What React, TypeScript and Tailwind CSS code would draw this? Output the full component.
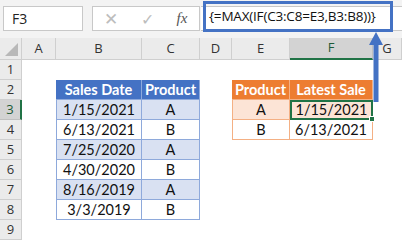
import React from 'react';

const cols = ['A', 'B', 'C', 'D', 'E', 'F', 'G'];

const sales = [
  ['1/15/2021', 'A'],
  ['6/13/2021', 'B'],
  ['7/25/2020', 'A'],
  ['4/30/2020', 'B'],
  ['8/16/2019', 'A'],
  ['3/3/2019', 'B'],
];

const App: React.FC = () => {
  return (
    <div className="relative w-[402px] h-[241px] overflow-hidden bg-white font-['Open_Sans',sans-serif]">
      {/* formula bar */}
      <div className="h-[38px] bg-[#f3f3f3] flex items-start pt-[6px] pl-[3px]">
        <div className="w-[80px] h-[25px] bg-white border border-[#c8c8c8] flex items-center pl-[8px] text-[14px] text-[#222]">
          F3
        </div>
        <div className="ml-[9px] w-[108px] h-[25px] bg-white border border-[#c8c8c8] flex items-center text-[#bdbdbd]">
          <span className="w-[36px] text-center text-[17px] leading-none">✕</span>
          <span className="w-[36px] text-center text-[16px] leading-none">✓</span>
          <span className="w-[34px] text-center text-[15px] italic font-['Liberation_Serif',serif] text-[#555]">fx</span>
        </div>
      </div>

      {/* sheet grid */}
      <div className="grid grid-cols-[22px_34px_86px_58px_32px_58px_83px_1fr] grid-rows-[22px_repeat(9,20px)] font-['Lato',sans-serif]">
        <div className="bg-[#ebebeb] border-r border-b border-[#cfcfcf] relative">
          <div className="absolute right-[3px] bottom-[3px] w-0 h-0 border-l-[13px] border-l-transparent border-b-[13px] border-b-[#b8b8b8]" />
        </div>
        {cols.map((c) => (
          <div
            key={c}
            className={
              c === 'F'
                ? 'bg-[#d3d3d3] border-r border-[#c0c0c0] border-b-2 border-b-[#217346] flex items-center justify-center text-[13px] text-[#1d5a37] font-["Open_Sans",sans-serif]'
                : 'bg-[#ebebeb] border-r border-b border-[#cfcfcf] flex items-center justify-center text-[13px] text-[#333] font-["Open_Sans",sans-serif]'
            }
          >
            {c}
          </div>
        ))}

        {Array.from({ length: 9 }, (_, i) => (
          <div
            key={i}
            style={{ gridRowStart: i + 2, gridColumnStart: 1 }}
            className={
              i === 2
                ? 'bg-[#d3d3d3] border-b border-[#c0c0c0] border-r-2 border-r-[#217346] flex items-center justify-center text-[13px] text-[#1d5a37] font-["Open_Sans",sans-serif]'
                : 'bg-[#ebebeb] border-b border-r border-[#cfcfcf] flex items-center justify-center text-[13px] text-[#333] font-["Open_Sans",sans-serif]'
            }
          >
            {i + 1}
          </div>
        ))}

        {/* sales table */}
        <div className="col-start-3 col-end-5 row-start-3 row-end-10 grid grid-cols-[86px_58px] grid-rows-[repeat(7,20px)] text-[14.5px] text-[#111]">
          <div className="bg-[#4472c4] text-white font-bold flex items-center justify-center border-r border-b border-[#8ea9db]">Sales Date</div>
          <div className="bg-[#4472c4] text-white font-bold flex items-center justify-center border-b border-r border-[#8ea9db]">Product</div>
          {sales.map(([d, p], i) => (
            <React.Fragment key={d}>
              <div className={`${i % 2 === 0 ? 'bg-[#d9e1f2]' : 'bg-white'} flex items-center justify-center border-l border-r border-b border-[#8ea9db]`}>{d}</div>
              <div className={`${i % 2 === 0 ? 'bg-[#d9e1f2]' : 'bg-white'} flex items-center justify-center border-r border-b border-[#8ea9db]`}>{p}</div>
            </React.Fragment>
          ))}
        </div>

        {/* result table */}
        <div className="col-start-6 col-end-8 row-start-3 row-end-6 grid grid-cols-[58px_83px] grid-rows-[repeat(3,20px)] text-[14.5px] text-[#111]">
          <div className="bg-[#ed7d31] text-white font-bold flex items-center justify-center border-r border-b border-[#f4b084]">Product</div>
          <div className="bg-[#ed7d31] text-white font-bold flex items-center justify-center border-b border-r border-[#f4b084]">Latest Sale</div>
          <div className="bg-[#fce4d6] flex items-center justify-center border-l border-r border-b border-[#f4b084]">A</div>
          <div className="relative bg-[#fce4d6] flex items-center justify-center border-2 border-[#217346]">
            1/15/2021
            <div className="absolute -right-[4px] -bottom-[4px] w-[6px] h-[6px] bg-[#217346] border border-white" />
          </div>
          <div className="bg-white flex items-center justify-center border-l border-r border-b border-[#f4b084]">B</div>
          <div className="bg-white flex items-center justify-center border-r border-b border-[#f4b084]">6/13/2021</div>
        </div>
      </div>

      {/* formula input with highlight */}
      <div className="absolute left-[201px] top-[6px] w-[201px] h-[25px] bg-white border-y border-[#c8c8c8]" />
      <div className="absolute left-[203px] top-[1px] w-[190px] h-[31px] border-[3px] border-[#4472c4] flex items-center pl-[3px] text-[13.5px] text-[#111] font-['Open_Sans',sans-serif] tracking-[-0.2px]">
        {'{=MAX(IF(C3:C8=E3,B3:B8))}'}
      </div>

      {/* arrow */}
      <svg className="absolute left-[366px] top-[30px]" width="20" height="76" viewBox="0 0 20 76">
        <polygon points="10,2 3,15 17,15" fill="#4472c4" />
        <rect x="7.5" y="14" width="5" height="58" fill="#4472c4" />
      </svg>
    </div>
  );
};

export default App;
